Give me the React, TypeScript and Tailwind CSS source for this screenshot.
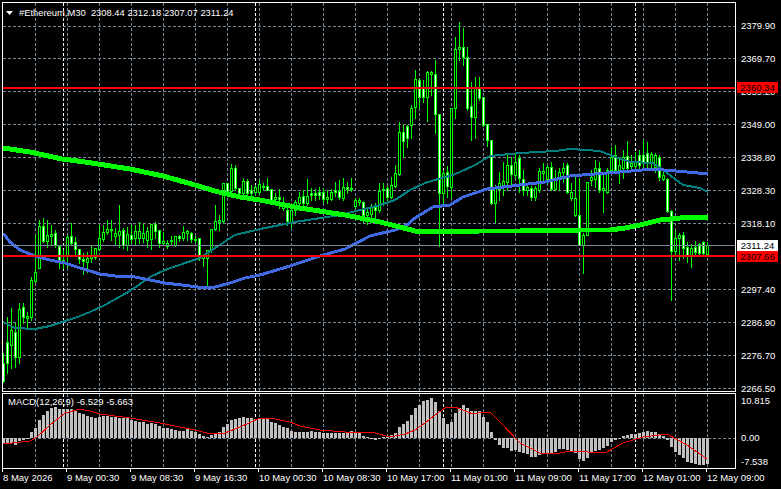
import React from 'react';

// [high, bodyTop, bodyBottom, low, whiteFill] in page pixels, one candle every 4px from x=3
const candles: number[][] = [
  [353,363,381,382,1],[317,342,363,373,1],[308,330,345,368,0],[323,332,357,367,1],[303,309,357,363,0],
  [303,307,317,323,1],[312,316,318,328,0],[277,280,317,320,0],[235,272,281,282,0],[220,226,268,268,0],
  [218,226,241,242,1],[220,235,241,247,0],[225,234,236,245,0],[230,233,245,247,1],[245,246,261,268,1],
  [250,260,263,268,0],[235,237,255,267,0],[223,236,243,244,1],[237,242,249,255,1],[249,249,259,263,1],
  [253,259,261,274,1],[252,258,262,272,0],[246,256,258,262,0],[248,248,257,259,0],[225,238,249,250,0],
  [225,232,239,241,0],[220,229,232,234,0],[220,229,230,240,0],[228,233,236,245,0],[205,231,235,247,0],
  [228,230,245,248,1],[227,234,245,250,0],[225,235,239,243,1],[225,231,238,245,0],[222,231,238,243,0],
  [224,233,238,242,0],[227,231,240,247,0],[224,224,239,249,0],[222,224,231,238,1],[230,230,243,247,1],
  [232,241,243,245,0],[240,243,246,248,0],[236,240,241,245,0],[236,236,245,246,0],[235,236,238,241,1],
  [226,232,238,240,0],[230,231,233,240,0],[232,233,239,242,1],[236,239,240,242,0],[238,238,256,260,1],
  [255,256,258,266,0],[250,250,258,287,0],[229,229,250,252,0],[205,221,229,230,0],[215,220,222,230,0],
  [183,183,221,222,0],[183,183,191,196,1],[164,168,191,192,0],[165,168,188,190,1],[188,188,193,195,1],
  [178,181,193,197,0],[179,181,193,195,1],[185,190,193,198,1],[185,187,192,195,0],[180,184,192,194,0],
  [183,186,187,190,0],[178,186,190,190,1],[189,189,200,201,1],[193,197,199,203,0],[189,197,199,208,1],
  [197,202,208,210,0],[203,210,221,225,1],[208,210,222,227,0],[200,202,210,215,0],[192,197,203,210,0],
  [190,196,203,205,1],[179,196,203,205,0],[188,193,195,200,1],[189,193,195,200,1],[187,192,195,199,1],
  [188,192,199,202,1],[190,197,199,203,0],[189,192,199,200,0],[182,190,192,196,1],[180,191,197,199,1],
  [178,187,198,200,0],[182,187,189,193,1],[178,188,189,191,0],[198,200,206,208,0],[198,200,202,205,0],
  [201,202,215,222,1],[208,212,215,224,0],[204,207,214,222,0],[203,207,210,218,1],[183,191,210,212,0],
  [183,189,190,205,0],[186,188,197,203,1],[177,185,197,198,0],[165,173,186,187,0],[122,132,174,175,0],
  [125,132,141,157,1],[125,126,138,147,1],[105,108,125,138,0],[70,79,107,118,0],[78,80,97,108,1],
  [80,88,97,102,1],[71,72,97,121,0],[71,72,74,95,0],[60,74,114,133,1],[114,114,193,246,1],
  [170,173,193,205,0],[166,172,186,197,1],[108,108,187,197,0],[37,49,108,118,0],[22,47,49,60,0],
  [28,47,57,65,1],[47,57,108,110,1],[82,106,117,140,1],[77,87,117,138,0],[77,87,98,100,1],
  [97,97,125,126,1],[124,124,140,146,1],[140,140,203,204,1],[185,187,203,222,0],[172,183,189,200,0],
  [162,181,187,195,0],[155,165,182,190,0],[157,165,174,185,1],[153,162,175,178,0],[155,158,178,192,1],
  [170,179,190,195,1],[185,187,190,195,0],[186,188,197,200,1],[186,188,197,200,0],[168,171,190,192,0],
  [163,171,173,182,0],[165,167,179,183,0],[162,167,189,190,1],[170,179,189,190,0],[168,172,178,190,0],
  [163,168,172,182,0],[163,165,192,193,1],[183,192,198,200,0],[177,198,215,216,0],[178,215,245,245,1],
  [233,235,245,273,0],[182,182,235,235,0],[170,177,180,185,0],[160,168,179,187,0],[162,168,190,192,1],
  [172,188,190,212,0],[168,170,192,193,0],[147,157,170,172,0],[145,155,170,172,1],[157,165,170,183,0],
  [150,157,168,178,0],[141,156,168,172,1],[155,163,166,170,0],[152,162,166,170,0],[150,155,165,170,1],
  [140,155,163,170,1],[142,153,163,170,1],[152,154,162,170,0],[153,155,167,172,0],[155,157,177,180,1],
  [172,175,179,180,0],[178,179,211,212,1],[210,211,251,300,1],[230,238,251,255,0],[233,235,238,260,0],
  [232,235,248,258,1],[242,247,255,262,1],[244,248,255,267,0],[241,247,252,255,1],[243,244,253,255,1],
  [241,242,253,254,1],[242,245,254,255,0],
];

const maGreen = '3,148 30,152 62,159 85,162 130,169 163,176 195,185 215,191 240,197 260,200 300,208 345,215 380,222 400,227 415,231 430,232 480,231 520,231 580,230 610,230 625,228 640,225 660,220 680,218 708,217';
const maBlue = '3,233 10,242 20,250 35,256 50,260 65,263 80,268 100,274 115,276 135,277 150,280 165,283 190,286 205,288 215,287 230,283 245,278 260,275 290,266 320,256 345,249 370,236 395,230 407,225 415,218 433,207 450,205 463,197 487,189 520,185 545,182 570,176 620,172 653,169 687,172 708,174';
const maTeal = '3,322 15,328 35,329 50,326 65,321 75,318 90,312 105,305 130,291 150,277 165,270 185,263 200,258 215,248 235,235 260,229 295,222 340,215 380,205 395,200 410,190 425,183 445,177 450,176 460,172 475,165 490,156 520,153 555,151 570,149 600,151 610,155 630,162 653,163 667,173 683,185 700,188 708,192';
const signal = '3,444 30,441 37,437 50,425 65,413 80,409 90,411 100,414 130,418 160,423 195,430 207,433 225,433 240,427 260,418 275,419 290,422 300,426 320,430 345,432 375,433 390,437 405,434 415,430 425,423 435,415 445,408 455,407 473,414 483,412 490,412 500,422 520,443 540,453 560,453 570,451 605,453 623,443 643,437 667,434 687,445 707,459';

// bar tops, read as y = 385 + v / 3 with the zero line at y = 438
const macd = [
  178,178,175,180,168,165,163,142,128,105,90,78,68,66,72,72,72,72,78,85,88,93,97,100,95,93,93,95,97,100,100,100,
  105,107,110,112,117,115,118,123,128,130,133,135,137,137,133,137,140,147,153,155,150,145,140,127,118,105,102,100,97,98,98,102,102,
  103,103,110,115,120,125,130,137,140,140,140,140,137,140,142,143,143,143,143,143,143,143,138,142,145,153,157,162,164,158,155,155,150,145,125,118,108,90,70,60,48,45,40,50,78,98,118,110,85,70,60,68,78,78,78,95,110,140,165,180,188,190,197,195,200,
  205,208,215,215,210,205,207,205,200,193,193,195,198,205,222,228,218,205,198,195,190,182,172,165,160,153,150,148,146,143,140,138,140,142,148,152,165,185,202,210,220,230,233,238,240,240,237,
];

const hGrid = [26, 58, 91, 124, 157, 190, 223, 256, 289, 322, 355, 388];
const vGrid = Array.from({ length: 22 }, (_, i) => 35 + 32 * i);
const periods = [63, 255, 443, 635];
const prices = ['2379.90', '2369.70', '2359.20', '2349.00', '2338.80', '2328.30', '2318.10', '2307.60', '2297.40', '2286.90', '2276.70', '2266.50'];
const times = ['8 May 2026', '9 May 00:30', '9 May 08:30', '9 May 16:30', '10 May 00:30', '10 May 08:30', '10 May 17:00', '11 May 01:00', '11 May 09:00', '11 May 17:00', '12 May 01:00', '12 May 09:00'];

const VerticalGrid: React.FC<{ top: number; bottom: number }> = ({ top, bottom }) => (
  <>
    {vGrid.map(x => (
      <line key={x} x1={x + 0.5} x2={x + 0.5} y1={top} y2={bottom} stroke="#778899" strokeDasharray="3 2" />
    ))}
    {periods.map(x => (
      <line key={x} x1={x + 0.5} x2={x + 0.5} y1={top} y2={bottom} stroke="#ffffff" strokeDasharray="3 2" />
    ))}
  </>
);

const PriceChart = () => (
  <svg width="732" height="388" viewBox="3 3 732 388" shapeRendering="crispEdges" className="block">
    {hGrid.map(y => (
      <line key={y} x1="3" x2="735" y1={y + 0.5} y2={y + 0.5} stroke="#778899" strokeDasharray="3 2" />
    ))}
    <VerticalGrid top={3} bottom={391} />
    {candles.map((c, i) => {
      const x = 3 + 4 * i;
      return (
        <g key={i}>
          <rect x={x} y={c[0]} width="1" height={c[3] - c[0] + 1} fill="#00ff00" />
          <rect x={x - 1} y={c[1]} width="3" height={c[2] - c[1] + 1} fill="#00ff00" />
          <rect x={x} y={c[1] + 1} width="1" height={Math.max(c[2] - c[1] - 1, 0)} fill={c[4] ? '#ffffff' : '#000000'} />
        </g>
      );
    })}
    <polyline points={maTeal} fill="none" stroke="#008080" strokeWidth="2" />
    <polyline points={maBlue} fill="none" stroke="#4169e1" strokeWidth="3" />
    <polyline points={maGreen} fill="none" stroke="#00ff00" strokeWidth="5" />
    <line x1="3" x2="735" y1="245.5" y2="245.5" stroke="#778899" />
    <rect x="3" y="87" width="732" height="2" fill="#ff0000" />
    <rect x="3" y="255" width="732" height="2" fill="#ff0000" />
  </svg>
);

const MacdChart = () => (
  <svg width="732" height="74" viewBox="3 394 732 74" shapeRendering="crispEdges" className="block">
    <line x1="3" x2="735" y1="438.5" y2="438.5" stroke="#778899" strokeDasharray="3 2" />
    <VerticalGrid top={394} bottom={468} />
    {macd.map((v, i) => {
      const y = Math.round(385 + v / 3);
      return <rect key={i} x={2 + 4 * i} y={Math.min(y, 438)} width="3" height={Math.max(Math.abs(y - 438), 1)} fill="#c0c0c0" />;
    })}
    <polyline points={signal} fill="none" stroke="#ff0000" strokeWidth="1" />
  </svg>
);

const Tag: React.FC<{ y: string; className: string; children: React.ReactNode }> = ({ y, className, children }) => (
  <div className={`absolute left-[737px] w-[41px] h-[11px] leading-[11px] text-center ${y} ${className}`}>{children}</div>
);

export default function App() {
  return (
    <div className="relative w-[781px] h-[489px] overflow-hidden bg-black text-white text-[9.5px] font-['Liberation_Sans',sans-serif]">
      <div className="flex pt-[2px] pl-[2px]">
        <div className="flex flex-col gap-px">
          <div className="relative w-[734px] h-[390px] border border-white">
            <PriceChart />
            <div className="absolute left-[3px] top-[4px] flex items-center gap-[6px] leading-[12px] text-[9.4px]">
              <svg width="7" height="4" viewBox="0 0 7 4"><polygon points="0,0 7,0 3.5,4" fill="#ffffff" /></svg>
              <span>#Ethereum,M30&nbsp;&nbsp;2308.44 2312.18 2307.07 2311.24</span>
            </div>
          </div>
          <div className="relative w-[734px] h-[76px] border border-white">
            <MacdChart />
            <div className="absolute left-[5px] top-[2px] leading-[12px]">MACD(12,26,9) -6.529 -5.663</div>
          </div>
        </div>
        <div className="flex flex-col pl-[5px]">
          <div className="flex flex-col pt-[7px] h-[391px]">
            {prices.map(p => (
              <div key={p} className="h-[33px] leading-[33px] shrink-0">{p}</div>
            ))}
          </div>
          <div className="relative flex flex-col h-[76px] pt-[1px]">
            <div className="h-[14px] leading-[14px]">10.815</div>
            <div className="mt-[23px] h-[14px] leading-[14px]">0.00</div>
            <div className="mt-[10px] h-[14px] leading-[14px]">-7.538</div>
          </div>
        </div>
      </div>
      <div className="flex pl-[2px]">
        {times.map(t => (
          <div key={t} className="w-[64px] shrink-0">
            <div className="w-px h-[3px] bg-white" />
            <div className="leading-[12px] pl-px whitespace-nowrap">{t}</div>
          </div>
        ))}
      </div>
      <Tag y="top-[82px]" className="bg-[#ff0000] text-black">2360.34</Tag>
      <Tag y="top-[240px]" className="bg-white text-black">2311.24</Tag>
      <Tag y="top-[251px]" className="bg-[#ff0000] text-black">2307.66</Tag>
    </div>
  );
}
